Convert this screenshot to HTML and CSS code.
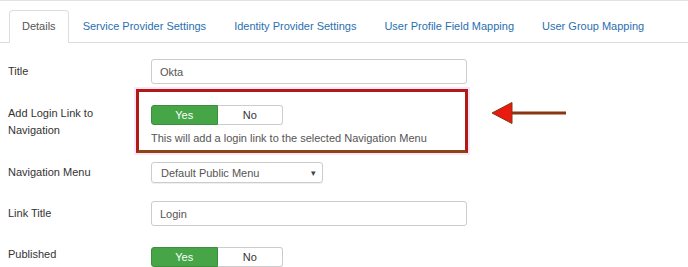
FILE: index.html
```
<!DOCTYPE html>
<html>
<head>
	<title>Okta SAML Login</title>
	<link rel="stylesheet" href="styles.css">
</head>
<body>
	<!-- Tabs -->
	<ul class="tabs">
		<li class="active"><a href="#details">Details</a></li>
		<li><a href="#sp">Service Provider Settings</a></li>
		<li><a href="#idp">Identity Provider Settings</a></li>
		<li><a href="#fields">User Profile Field Mapping</a></li>
		<li><a href="#groups">User Group Mapping</a></li>
	</ul>

	<!-- Details form -->
	<form class="details" id="details">
		<div class="row row-title">
			<label class="label">Title</label>
			<input class="text-input" type="text" value="Okta">
		</div>

		<div class="row row-login">
			<label class="label">Add Login Link to Navigation</label>
			<div class="highlight">
				<div class="toggle">
					<span class="yes">Yes</span>
					<span class="no">No</span>
				</div>
				<div class="help">This will add a login link to the selected Navigation Menu</div>
			</div>
			<svg class="arrow" width="76" height="24" viewBox="0 0 76 24">
				<line x1="20" y1="12" x2="75" y2="12" stroke="#8a3414" stroke-width="3"/>
				<polygon points="1,12 21,1.5 21,22.5" fill="#ea1a10" stroke="#7d3a12" stroke-width="1"/>
			</svg>
		</div>

		<div class="row row-menu">
			<label class="label">Navigation Menu</label>
			<div class="select">
				<span>Default Public Menu</span>
				<span class="caret">&#9662;</span>
			</div>
		</div>

		<div class="row row-link">
			<label class="label">Link Title</label>
			<input class="text-input" type="text" value="Login">
		</div>

		<div class="row row-published">
			<label class="label">Published</label>
			<div class="toggle">
				<span class="yes">Yes</span>
				<span class="no">No</span>
			</div>
		</div>
	</form>
</body>
</html>
```
FILE: styles.css
```
body {
	font-family: "Liberation Sans", Arial, sans-serif;
	font-size: 11px;
	color: #333;
	margin: 0;
	border-top: 1px solid #e2e2e2;
	overflow: hidden;
}

.tabs {
	list-style: none;
	margin: 9px 0 0 0;
	padding: 0 0 0 9px;
	display: flex;
	border-bottom: 1px solid #ddd;
	height: 32px;
}

.tabs li {
	margin-bottom: -1px;
}

.tabs a {
	display: block;
	padding: 0 13px;
	line-height: 31px;
	height: 32px;
	box-sizing: border-box;
	color: #2a6fb0;
	text-decoration: none;
	border: 1px solid transparent;
	border-bottom: none;
	border-radius: 4px 4px 0 0;
}

.tabs .active a {
	padding: 0 12px;
	color: #555;
	background-color: #fff;
	border-color: #ddd;
	height: 33px;
}

.details {
	padding-left: 8px;
}

.row {
	display: flex;
	align-items: center;
}

.label {
	width: 113px;
	padding-right: 30px;
	line-height: 17px;
	flex-shrink: 0;
}

.text-input {
	width: 316px;
	height: 25px;
	box-sizing: border-box;
	border: 1px solid #ccc;
	border-radius: 3px;
	padding: 0 8px;
	font-family: inherit;
	font-size: 11px;
	color: #555;
	margin: 0;
}

.row-title {
	margin-top: 16px;
}

.row-login {
	margin-top: 5px;
	align-items: flex-start;
}

.row-login .label {
	padding-top: 16px;
}

.highlight {
	margin-left: -15px;
	width: 332px;
	height: 64px;
	box-sizing: border-box;
	border: 3px solid #b01a12;
	border-bottom-color: #8a4513;
	padding: 13px 12px 0 12px;
	box-shadow: 0 0 0 2px #fde4fb;
}

.help {
	margin-top: 6px;
	line-height: 14px;
	color: #555;
}

.arrow {
	margin-left: 23px;
	margin-top: 12px;
}

.toggle {
	display: flex;
	width: 132px;
	height: 20px;
}

.toggle span {
	flex: 1;
	text-align: center;
	line-height: 18px;
	box-sizing: border-box;
}

.toggle .yes {
	background-color: #46a546;
	color: #fff;
	border: 1px solid #3d8f3d;
	border-radius: 3px 0 0 3px;
}

.toggle .no {
	background-color: #fff;
	color: #333;
	border: 1px solid #ccc;
	border-left: none;
	border-radius: 0 3px 3px 0;
}

.row-menu {
	margin-top: 9px;
}

.select {
	width: 172px;
	height: 21px;
	box-sizing: border-box;
	border: 1px solid #ccc;
	border-radius: 3px;
	padding: 0 6px 0 9px;
	display: flex;
	align-items: center;
	justify-content: space-between;
	color: #555;
	box-shadow: 0 1px 1px #eee;
}

.caret {
	font-size: 9px;
	color: #444;
}

.row-link {
	margin-top: 18px;
}

.row-published {
	margin-top: 21px;
	align-items: flex-start;
}

.row-published .label {
	line-height: 14px;
}
```
